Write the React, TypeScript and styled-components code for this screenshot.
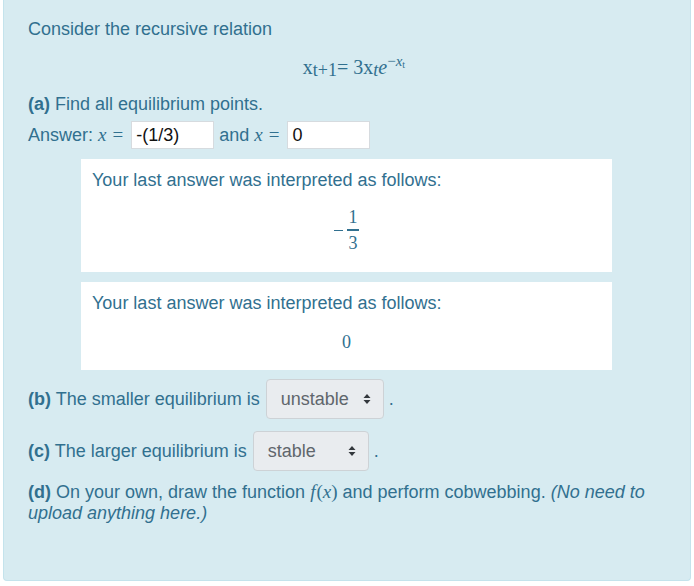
import React from 'react';
import styled, { createGlobalStyle } from 'styled-components';

const GlobalStyle = createGlobalStyle`
  html, body {
    margin: 0;
    padding: 0;
    background: #ffffff;
  }
  body {
    font-family: "Liberation Sans", Arial, sans-serif;
    font-size: 18px;
    color: #31708f;
  }
`;

const TEXT = '#31708f';
const MATH_FONT = '"Liberation Serif", "Times New Roman", serif';

const Panel = styled.div`
  box-sizing: border-box;
  margin: 0 3px;
  height: 581px;
  padding: 19px 24px 0 24px;
  background: #d7ebf1;
  border: 1px solid #c4e3ec;
  border-top: none;
  border-radius: 0 0 4px 4px;
  line-height: 20px;
`;

const Para = styled.div<{ $top?: number }>`
  margin-top: ${p => p.$top ?? 0}px;
  line-height: 20px;
`;

const Bold = styled.b`
  font-weight: bold;
`;

const Equation = styled.div`
  margin-top: 18px;
  height: 20px;
  text-align: center;
  font-family: ${MATH_FONT};
  font-size: 20px;
  color: ${TEXT};
  padding-left: 14px;
`;

const Sub = styled.span`
  position: relative;
  top: 2px;
  font-size: 18px;
`;

const Sup = styled.span`
  position: relative;
  top: -8px;
  font-size: 15px;
`;

const MathVar = styled.i`
  font-family: ${MATH_FONT};
  font-size: 19px;
  padding-right: 1px;
`;

const MathOp = styled.span`
  font-family: ${MATH_FONT};
  font-size: 19px;
  margin: 0 5px;
`;

const AnswerRow = styled.div`
  margin-top: 7px;
  height: 28px;
  display: flex;
  align-items: center;
  white-space: pre;
`;

const AnswerInput = styled.input`
  box-sizing: border-box;
  width: 83px;
  height: 28px;
  margin: 0 5px 0 3px;
  padding: 0 4px;
  border: 1px solid #d6dbdf;
  background: #ffffff;
  font-family: "Liberation Sans", Arial, sans-serif;
  font-size: 18px;
  color: #111;
  outline: none;
`;

const Feedback = styled.div<{ $top: number; $bottom: number }>`
  box-sizing: border-box;
  margin: ${p => p.$top}px 54px 0 53px;
  padding: 11px 11px ${p => p.$bottom}px 11px;
  background: #ffffff;
`;

const FormulaLine = styled.div<{ $top: number }>`
  margin-top: ${p => p.$top}px;
  display: flex;
  justify-content: center;
  align-items: center;
  font-family: ${MATH_FONT};
  font-size: 18px;
  color: ${TEXT};
`;

const Minus = styled.span`
  display: inline-block;
  width: 9px;
  height: 1.5px;
  background: ${TEXT};
  margin-right: 4px;
`;

const Fraction = styled.span`
  display: inline-flex;
  flex-direction: column;
  align-items: center;
  line-height: 17px;
`;

const Bar = styled.span`
  display: block;
  width: 12px;
  height: 1.5px;
  background: ${TEXT};
  margin: 3px 0 4px;
`;

const ChoiceRow = styled.div<{ $top: number }>`
  margin-top: ${p => p.$top}px;
  height: 40px;
  display: flex;
  align-items: center;
  white-space: pre;
`;

const Select = styled.div<{ $width: number }>`
  box-sizing: border-box;
  width: ${p => p.$width}px;
  height: 40px;
  margin-left: 6px;
  margin-right: 5px;
  padding: 0 12px 0 14px;
  display: flex;
  align-items: center;
  justify-content: space-between;
  background: #e9ecef;
  border: 1.5px solid #cdd2d6;
  border-radius: 4px;
  color: #5f666c;
`;

const Arrows = styled.svg`
  width: 8px;
  height: 12px;
  display: block;
`;

const Italic = styled.i`
  font-style: italic;
`;

const Final = styled.div`
  margin-top: 10px;
  line-height: 21px;
  padding-right: 6px;
`;

const UpDown = () => (
  <Arrows viewBox="0 0 8 12">
    <path d="M4 1 L7.5 5 L0.5 5 Z M4 11 L7.5 7 L0.5 7 Z" fill="#33383d" />
  </Arrows>
);

export default function App() {
  return (
    <>
      <GlobalStyle />
      <Panel>
        <Para>Consider the recursive relation</Para>
        <Equation>
          x<Sub>t+1</Sub>= 3x<Sub><i>t</i></Sub><i>e</i>
          <Sup>−<i>x</i><Sub style={{ fontSize: 10 }}>t</Sub></Sup>
        </Equation>
        <Para $top={17}>
          <Bold>(a)</Bold> Find all equilibrium points.
        </Para>
        <AnswerRow>
          Answer: <MathVar>x</MathVar>
          <MathOp>=</MathOp>
          <AnswerInput defaultValue="-(1/3)" />
          and <MathVar>x</MathVar>
          <MathOp>=</MathOp>
          <AnswerInput defaultValue="0" />
        </AnswerRow>
        <Feedback $top={10} $bottom={20}>
          <Para>Your last answer was interpreted as follows:</Para>
          <FormulaLine $top={19}>
            <Minus />
            <Fraction>
              <span>1</span>
              <Bar />
              <span>3</span>
            </Fraction>
          </FormulaLine>
        </Feedback>
        <Feedback $top={10} $bottom={18}>
          <Para>Your last answer was interpreted as follows:</Para>
          <FormulaLine $top={19}>0</FormulaLine>
        </Feedback>
        <ChoiceRow $top={9}>
          <Bold>(b)</Bold> The smaller equilibrium is
          <Select $width={118}>
            <span>unstable</span>
            <UpDown />
          </Select>
          .
        </ChoiceRow>
        <ChoiceRow $top={12}>
          <Bold>(c)</Bold> The larger equilibrium is
          <Select $width={116}>
            <span>stable</span>
            <UpDown />
          </Select>
          .
        </ChoiceRow>
        <Final>
          <Bold>(d)</Bold> On your own, draw the function{' '}
          <MathVar>f</MathVar>
          <span style={{ fontFamily: MATH_FONT, fontSize: 19 }}>(<i>x</i>)</span> and perform cobwebbing.{' '}
          <Italic>(No need to upload anything here.)</Italic>
        </Final>
      </Panel>
    </>
  );
}
